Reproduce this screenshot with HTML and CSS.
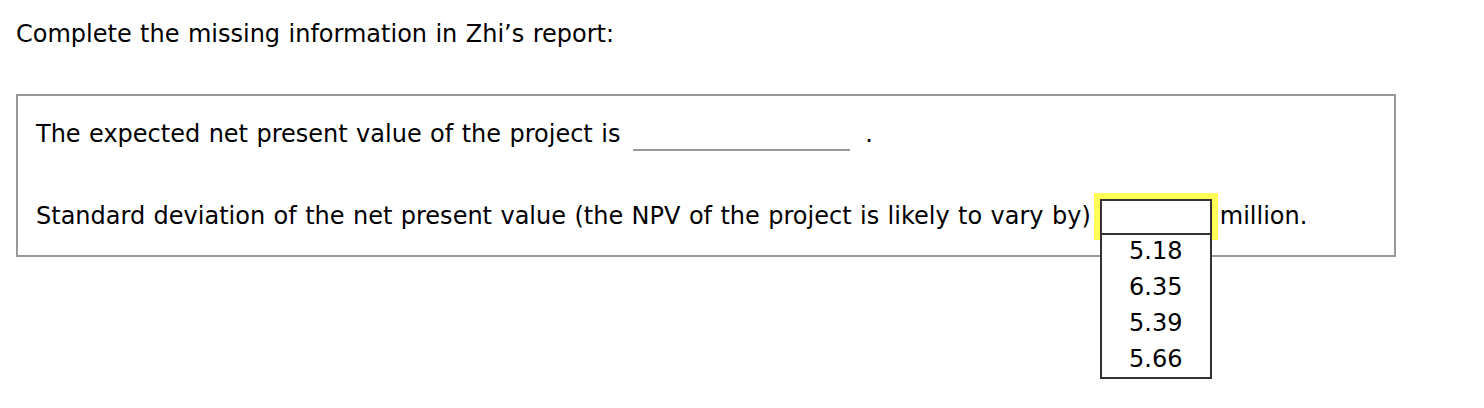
FILE: index.html
```html
<!DOCTYPE html>
<html lang="en">
<head>
  <meta charset="UTF-8" />
  <title>Zhi's report</title>
  <link rel="stylesheet" href="styles.css">
</head>
<body>
  <p class="prompt">Complete the missing information in Zhi’s report:</p>

  <div class="report">
    <p class="row first">The expected net present value of the project is <span class="blank"></span> .</p>
    <p class="row second">Standard deviation of the net present value (the NPV of the project is likely to vary by)<span class="dropdown"><span class="select"></span><span class="options">
        <span class="option">5.18</span>
        <span class="option">6.35</span>
        <span class="option">5.39</span>
        <span class="option">5.66</span>
      </span></span>million.</p>
  </div>
</body>
</html>
```

FILE: styles.css
```css
:root {
  --text: #000;
  --box-border: #999;
  --select-border: #333;
  --focus: #ffff55;
}

html {
  height: 100%;
}

body {
  margin: 0;
  padding: 16px;
  min-height: 100%;
  box-sizing: border-box;
  font-family: "DejaVu Sans", Verdana, sans-serif;
  font-size: 24px;
  line-height: 36px;
  word-spacing: 0.8px;
  color: var(--text);
  background: #fff;
}

.prompt {
  margin: 0;
}

.report {
  margin-top: 42px;
  width: 1380px;
  box-sizing: border-box;
  border: 2px solid var(--box-border);
  padding: 20px 18px 15px;
}

.row {
  margin: 0;
  white-space: nowrap;
}

.row.second {
  margin-top: 41px;
}

.blank {
  display: inline-block;
  width: 217px;
  height: 0;
  margin: 0 7px 0 4px;
  border-bottom: 2px solid var(--box-border);
  vertical-align: -9px;
}

.dropdown {
  position: relative;
  display: inline-block;
  vertical-align: middle;
  margin: 0 2px 0 3px;
  padding: 6px 6px 5px;
  background: var(--focus);
}

.select {
  position: relative;
  z-index: 1;
  display: block;
  width: 112px;
  height: 36px;
  box-sizing: border-box;
  border: 2px solid var(--select-border);
  background: #fff;
}

.options {
  position: absolute;
  top: 40px;
  left: 6px;
  display: flex;
  flex-direction: column;
  width: 112px;
  box-sizing: border-box;
  border: 2px solid var(--select-border);
  border-top: none;
  background: #fff;
  text-align: center;
}

.option {
  display: block;
  line-height: 36px;
}
```
